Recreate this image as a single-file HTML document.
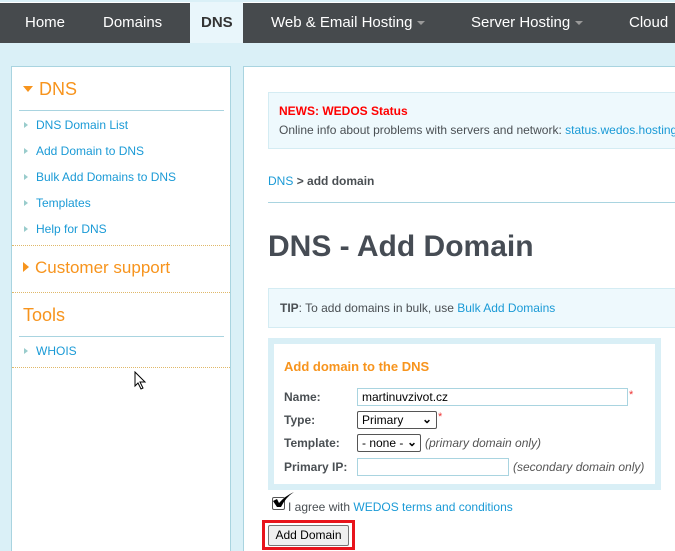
<!DOCTYPE html>
<html><head><style>
*{margin:0;padding:0;box-sizing:border-box}
html,body{width:675px;height:551px;overflow:hidden}
body{background:#daf0f7;font-family:"Liberation Sans",Arial,sans-serif;position:relative;font-size:12px;color:#4a4f53}
.a{position:absolute}
#nav{left:0;top:2px;width:675px;height:41px;background:#464a4d;border-top:1px solid #fff}
.n{position:absolute;color:#fff;font-size:15px;white-space:nowrap}
.tri{display:inline-block;width:0;height:0;border-left:4px solid transparent;border-right:4px solid transparent;border-top:4px solid #999;vertical-align:middle;margin-left:5px}
#side{left:11px;top:66px;width:220px;height:500px;background:#fff;border:1px solid #a9d4e0}
#main{left:243px;top:66px;width:440px;height:500px;background:#fff;border:1px solid #a9d4e0}
a{color:#1a9ad6;text-decoration:none}
.sl{position:absolute;left:24px;font-size:12px;color:#1a9ad6}
.sl:before{content:"";position:absolute;left:-12px;top:4px;border-top:3px solid transparent;border-bottom:3px solid transparent;border-left:4px solid #9cc}
.or{color:#f7941d;position:absolute;font-size:18px}
.hr{position:absolute;height:1px;background:#a9d4e0}
.dot{position:absolute;left:0;width:218px;border-top:1px dotted #e0b868}
.lbl{position:absolute;left:284px;font-weight:bold;font-size:12px;color:#4a4f53}
.in{position:absolute;border:1px solid #a9d4e0;background:#fff;height:18px;font-size:12px;padding:1px 4px;color:#000}
.sel{position:absolute;border:1px solid #555;border-radius:2px;background:#fff;height:18px;font-size:12px;padding:1px 4px;color:#000}
.it{position:absolute;font-style:italic;color:#555;font-size:12px}
.st{color:#e33;position:absolute;font-size:11px}
</style></head><body>
<div id="nav" class="a"></div>
<div class="a" style="left:190px;top:2px;width:53px;height:41px;background:#e9f6fb"></div>
<span class="n" style="left:25px;top:14px">Home</span>
<span class="n" style="left:103px;top:14px">Domains</span>
<span class="n" style="left:201px;top:14px;color:#333;font-weight:bold">DNS</span>
<span class="n" style="left:271px;top:14px">Web &amp; Email Hosting<span class="tri"></span></span>
<span class="n" style="left:471px;top:14px">Server Hosting<span class="tri"></span></span>
<span class="n" style="left:629px;top:14px">Cloud</span>

<div id="side" class="a">
 <div class="a" style="left:11px;top:19px;border-left:5px solid transparent;border-right:5px solid transparent;border-top:6px solid #f7941d"></div>
 <span class="or" style="left:27px;top:12px">DNS</span>
 <div class="hr" style="left:7px;top:43px;width:205px"></div>
 <span class="sl" style="top:51px">DNS Domain List</span>
 <span class="sl" style="top:77px">Add Domain to DNS</span>
 <span class="sl" style="top:103px">Bulk Add Domains to DNS</span>
 <span class="sl" style="top:129px">Templates</span>
 <span class="sl" style="top:155px">Help for DNS</span>
 <div class="dot" style="top:178px"></div>
 <div class="a" style="left:11px;top:195px;border-top:5px solid transparent;border-bottom:5px solid transparent;border-left:6px solid #f7941d"></div>
 <span class="or" style="left:23px;top:191px;font-size:17px">Customer support</span>
 <div class="dot" style="top:225px"></div>
 <span class="or" style="left:11px;top:238px">Tools</span>
 <div class="hr" style="left:7px;top:269px;width:205px"></div>
 <span class="sl" style="top:277px">WHOIS</span>
 <div class="dot" style="top:300px"></div>
</div>

<div id="main" class="a"></div>
<div class="a" style="left:268px;top:92px;width:420px;height:57px;background:#eef9fd;border:1px solid #d4ecf3"></div>
<span class="a" style="left:279px;top:104px;color:#f00;font-weight:bold;font-size:12px">NEWS: WEDOS Status</span>
<span class="a" style="left:279px;top:123px;font-size:12px;white-space:nowrap">Online info about problems with servers and network: <a>status.wedos.hosting</a></span>
<span class="a" style="left:268px;top:174px;font-size:12px"><a>DNS</a> <b>&gt; add domain</b></span>
<div class="hr" style="left:268px;top:202px;width:410px"></div>
<span class="a" style="left:268px;top:230px;font-size:30px;font-weight:bold;color:#464c54">DNS - Add Domain</span>
<div class="a" style="left:268px;top:288px;width:420px;height:40px;background:#eef9fd;border:1px solid #d4ecf3"></div>
<span class="a" style="left:280px;top:301px;font-size:12px"><b>TIP</b>: To add domains in bulk, use <a>Bulk Add Domains</a></span>
<div class="a" style="left:268px;top:338px;width:393px;height:152px;background:#fff;border:6px solid #d9eff6"></div>
<span class="a" style="left:284px;top:359px;color:#f7941d;font-weight:bold;font-size:13px">Add domain to the DNS</span>
<span class="lbl" style="top:390px">Name:</span>
<div class="in" style="left:357px;top:388px;width:271px">martinuvzivot.cz</div><span class="st" style="left:629px;top:389px">*</span>
<span class="lbl" style="top:413px">Type:</span>
<div class="sel" style="left:357px;top:411px;width:80px">Primary<span style="position:absolute;right:4px;top:0;font-weight:bold">⌄</span></div><span class="st" style="left:438px;top:411px">*</span>
<span class="lbl" style="top:436px">Template:</span>
<div class="sel" style="left:357px;top:434px;width:64px">- none -<span style="position:absolute;right:3px;top:0;font-weight:bold">⌄</span></div>
<span class="it" style="left:425px;top:436px">(primary domain only)</span>
<span class="lbl" style="top:460px">Primary IP:</span>
<div class="in" style="left:357px;top:458px;width:152px"></div>
<span class="it" style="left:513px;top:460px">(secondary domain only)</span>
<div class="a" style="left:272px;top:497px;width:13px;height:13px;border:1px solid #555;border-radius:2px;background:#fff"></div>
<svg class="a" style="left:271px;top:490px" width="24" height="20"><path d="M2 11 L6 17 L10 17 Q15 7 23 2 Q14 6 8 13 L6 9 Z" fill="#000"/></svg>
<span class="a" style="left:288px;top:500px;font-size:12px">I agree with <a>WEDOS terms and conditions</a></span>
<div class="a" style="left:262px;top:520px;width:93px;height:30px;border:3px solid #e8141c"></div>
<div class="a" style="left:268px;top:525px;width:81px;height:21px;background:#efefef;border:1px solid #767676;border-radius:2px;font-size:12px;color:#000;text-align:center;line-height:19px">Add Domain</div>
<svg class="a" style="left:134px;top:371px" width="14" height="20"><path d="M1 1 L1 15 L4 12 L7 18 L9 17 L6 11 L11 11 Z" fill="#fff" stroke="#000"/></svg>
</body></html>
